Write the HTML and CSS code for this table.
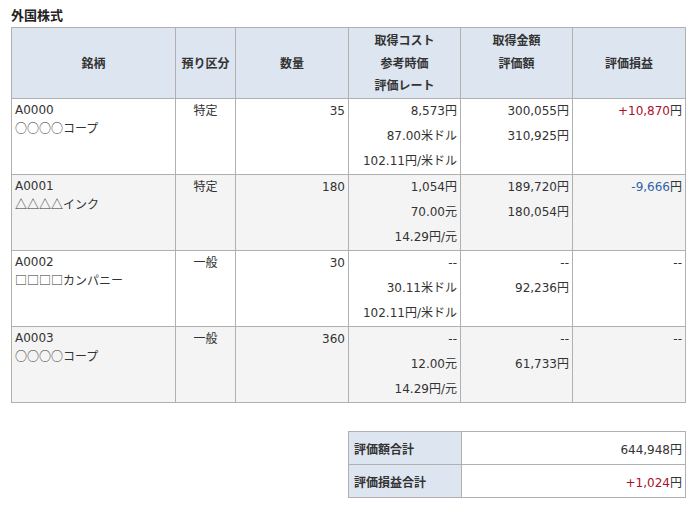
FILE: index.html
```html
<!DOCTYPE html>
<html lang="ja">
<head>
<meta charset="utf-8">
<link rel="stylesheet" href="styles.css">
</head>
<body>
<h2 class="title">外国株式</h2>
<table class="holdings">
  <colgroup>
    <col class="c-name"><col class="c-type"><col class="c-qty"><col class="c-cost"><col class="c-amt"><col class="c-pl">
  </colgroup>
  <thead>
    <tr>
      <th>銘柄</th>
      <th>預り区分</th>
      <th>数量</th>
      <th><div>取得コスト</div><div>参考時価</div><div>評価レート</div></th>
      <th><div>取得金額</div><div>評価額</div><div>&nbsp;</div></th>
      <th>評価損益</th>
    </tr>
  </thead>
  <tbody>
    <tr>
      <td class="name"><div class="name-in">A0000<br><span class="cj">○○○○</span>コープ</div></td>
      <td class="type">特定</td>
      <td class="num">35</td>
      <td class="lines"><div>8,573円</div><div>87.00米ドル</div><div>102.11円/米ドル</div></td>
      <td class="lines"><div>300,055円</div><div>310,925円</div></td>
      <td class="lines"><div><span class="plus">+10,870</span>円</div></td>
    </tr>
    <tr class="alt">
      <td class="name"><div class="name-in">A0001<br><span class="cj">△△△△</span>インク</div></td>
      <td class="type">特定</td>
      <td class="num">180</td>
      <td class="lines"><div>1,054円</div><div>70.00元</div><div>14.29円/元</div></td>
      <td class="lines"><div>189,720円</div><div>180,054円</div></td>
      <td class="lines"><div><span class="minus">-9,666</span>円</div></td>
    </tr>
    <tr>
      <td class="name"><div class="name-in">A0002<br><span class="cj">□□□□</span>カンパニー</div></td>
      <td class="type">一般</td>
      <td class="num">30</td>
      <td class="lines"><div>--</div><div>30.11米ドル</div><div>102.11円/米ドル</div></td>
      <td class="lines"><div>--</div><div>92,236円</div></td>
      <td class="lines"><div>--</div></td>
    </tr>
    <tr class="alt">
      <td class="name"><div class="name-in">A0003<br><span class="cj">○○○○</span>コープ</div></td>
      <td class="type">一般</td>
      <td class="num">360</td>
      <td class="lines"><div>--</div><div>12.00元</div><div>14.29円/元</div></td>
      <td class="lines"><div>--</div><div>61,733円</div></td>
      <td class="lines"><div>--</div></td>
    </tr>
  </tbody>
</table>
<div class="summary-wrap">
  <table class="summary">
    <tr><th>評価額合計</th><td>644,948円</td></tr>
    <tr><th>評価損益合計</th><td><span class="plus">+1,024</span>円</td></tr>
  </table>
</div>
</body>
</html>
```
FILE: styles.css
```css
html, body {
  margin: 0;
  padding: 0;
  background: #fff;
}
body {
  padding: 7px 12px 0 11px;
  font-family: "DejaVu Sans", "Noto Sans CJK JP", sans-serif;
  font-size: 12px;
  color: #333;
}
.cj {
  font-family: "Noto Sans CJK JP", sans-serif;
}
.title {
  margin: 0 0 4px 0;
  font-family: "Noto Sans CJK JP", sans-serif;
  font-size: 13px;
  line-height: 16px;
  font-weight: bold;
  color: #222;
}
.holdings {
  border-collapse: collapse;
  table-layout: fixed;
  width: 675px;
}
.c-name { width: 164px; }
.c-type { width: 60px; }
.c-qty { width: 113px; }
.c-cost { width: 112px; }
.c-amt { width: 112px; }
.c-pl { width: 113px; }
.holdings th, .holdings td {
  border: 1px solid #b0b0b0;
  padding: 0 3px;
}
.holdings th {
  background: #dce5f0;
  font-family: "Noto Sans CJK JP", sans-serif;
  font-weight: bold;
  height: 70px;
  line-height: 22.5px;
  text-align: center;
  vertical-align: middle;
  color: #333;
}
.holdings td {
  height: 75px;
  vertical-align: top;
  line-height: 25px;
}
.holdings tr.alt td {
  background: #f4f4f4;
}
.holdings td.name {
  text-align: left;
}
.name-in {
  line-height: 17px;
  padding-top: 3px;
}
.holdings td.type {
  text-align: center;
}
.holdings td.num,
.holdings td.lines {
  text-align: right;
}
.plus { color: #a8102e; }
.minus { color: #2d64a6; }
.summary-wrap {
  display: flex;
  justify-content: flex-end;
  margin-top: 28px;
}
.summary {
  border-collapse: collapse;
  width: 338px;
}
.summary th, .summary td {
  border: 1px solid #b0b0b0;
  height: 32px;
  padding: 0 3px;
}
.summary th {
  width: 104px;
  background: #dce5f0;
  font-family: "Noto Sans CJK JP", sans-serif;
  font-weight: bold;
  text-align: left;
  padding-left: 5px;
  color: #333;
}
.summary td {
  text-align: right;
}
```
